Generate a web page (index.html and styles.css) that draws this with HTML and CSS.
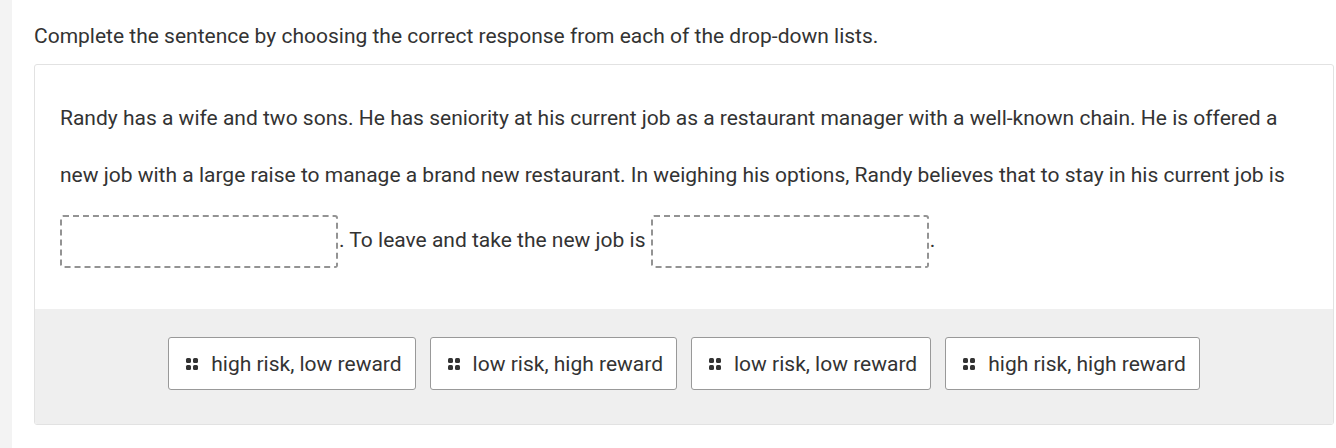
FILE: index.html
```html
<!DOCTYPE html>
<html lang="en">
<head>
<meta charset="utf-8">
<link rel="stylesheet" href="styles.css">
</head>
<body>
<div class="page">
  <div class="strip"></div>
  <main class="main">
    <p class="instruction">Complete the sentence by choosing the correct response from each of the drop-down lists.</p>
    <section class="panel">
      <p class="passage">Randy has a wife and two sons. He has seniority at his current job as a restaurant manager with a well-known chain. He is offered a new job with a large raise to manage a brand new restaurant. In weighing his options, Randy believes that to stay in his current job is <span class="blank"></span>. To leave and take the new job is <span class="blank"></span>.</p>
      <div class="bank">
        <button class="chip"><span class="grip"><i></i><i></i><i></i><i></i></span>high risk, low reward</button>
        <button class="chip"><span class="grip"><i></i><i></i><i></i><i></i></span>low risk, high reward</button>
        <button class="chip"><span class="grip"><i></i><i></i><i></i><i></i></span>low risk, low reward</button>
        <button class="chip"><span class="grip"><i></i><i></i><i></i><i></i></span>high risk, high reward</button>
      </div>
    </section>
  </main>
</div>
</body>
</html>
```
FILE: styles.css
```css
html, body {
  margin: 0;
  padding: 0;
  background: #fff;
}
body {
  font-family: Roboto, "Liberation Sans", sans-serif;
  color: #333;
  font-size: 21px;
}
.page {
  display: flex;
  min-height: 448px;
}
.strip {
  width: 12px;
  flex: none;
  background: #f3f3f3;
}
.main {
  flex: 1;
  padding: 22px 2px 0 22px;
}
.instruction {
  margin: 0 0 13px;
  line-height: 29px;
}
.panel {
  border: 1px solid #e2e2e2;
  border-radius: 3px;
  overflow: hidden;
}
.passage {
  margin: 0;
  padding: 25px 26px 30px 25px;
  line-height: 57px;
}
.blank {
  display: inline-block;
  width: 278px;
  height: 53px;
  box-sizing: border-box;
  border: 2px dashed #939393;
  border-radius: 3px;
  vertical-align: middle;
  margin: 11px 1px 11px 0;
}
.bank {
  background: #efefef;
  display: flex;
  justify-content: center;
  gap: 14px;
  padding: 28px 0 34px;
}
.chip {
  display: flex;
  align-items: center;
  gap: 13px;
  height: 53px;
  box-sizing: border-box;
  padding: 0 13px 0 17px;
  background: #fff;
  border: 1px solid #999;
  border-radius: 3px;
  font-family: inherit;
  font-size: 21px;
  color: #333;
}
.grip {
  display: grid;
  grid-template-columns: 5px 5px;
  gap: 2px;
}
.grip i {
  display: block;
  width: 5px;
  height: 5px;
  border-radius: 1.5px;
  background: #333;
}
```
